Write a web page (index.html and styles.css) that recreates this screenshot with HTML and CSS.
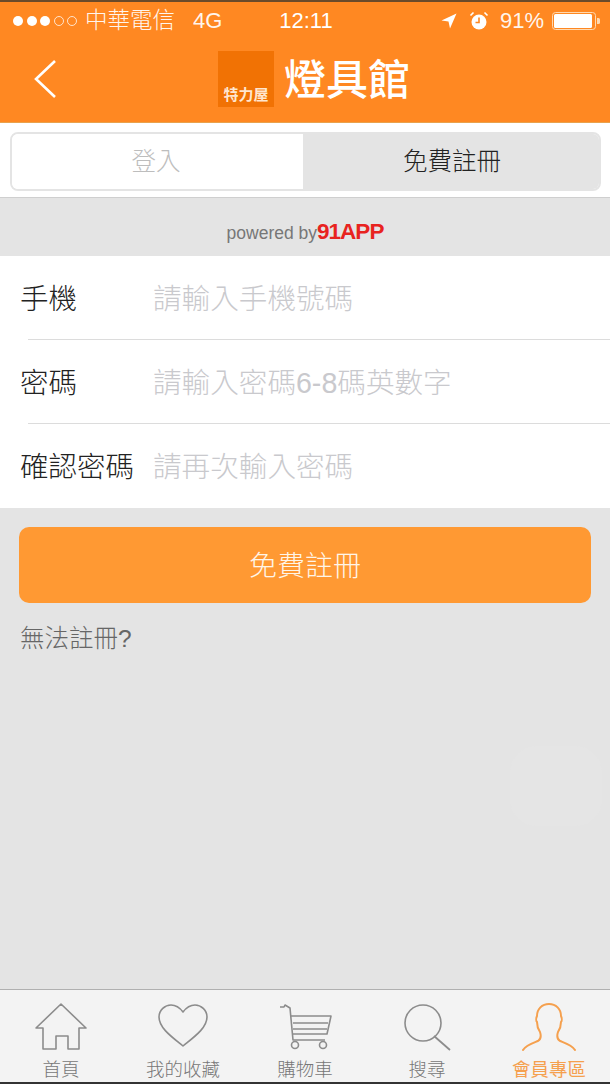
FILE: index.html
```html
<!DOCTYPE html>
<html lang="zh-Hant">
<head>
<meta charset="utf-8">
<title>免費註冊</title>
<link rel="stylesheet" href="styles.css">
</head>
<body>
<div class="page">
  <header class="top">
    <div class="status">
      <div class="status-left">
        <svg class="signal" width="72" height="14" viewBox="0 0 72 14"><circle cx="6" cy="7" r="5" fill="#fff"/><circle cx="20" cy="7" r="5" fill="#fff"/><circle cx="33" cy="7" r="5" fill="#fff"/><circle cx="47" cy="7" r="4.5" fill="none" stroke="#fff" stroke-opacity=".75"/><circle cx="60" cy="7" r="4.5" fill="none" stroke="#fff" stroke-opacity=".75"/></svg>
        <span class="carrier">中華電信</span>
        <span class="net">4G</span>
      </div>
      <div class="clock">12:11</div>
      <div class="status-right">
        <svg width="16" height="16" viewBox="0 0 16 16"><path d="M0.5 7.5 15.5 0.5 9 15.5 7.5 8.5Z" fill="#fff"/></svg>
        <svg class="alarm" width="20" height="20" viewBox="0 0 20 20"><circle cx="10" cy="11" r="7.5" fill="#fff"/><path d="M10 6.5V11.5H6.5" fill="none" stroke="#ff8822" stroke-width="1.6"/><path d="M1.5 4.5 4.5 1.5M18.5 4.5 15.5 1.5" stroke="#fff" stroke-width="1.6"/></svg>
        <span class="pct">91%</span>
        <svg width="48" height="18" viewBox="0 0 48 18"><rect x=".5" y=".5" width="43" height="17" rx="3" fill="none" stroke="#ffd9b0"/><rect x="2" y="2" width="38" height="14" rx="1.5" fill="#fff"/><path d="M45 6h1.500a1.500 1.500 0 0 1 1.500 1.500v3a1.500 1.500 0 0 1-1.500 1.500H45Z" fill="#ffd9b0"/></svg>
      </div>
    </div>
    <div class="nav">
      <svg class="back" width="24" height="40" viewBox="0 0 24 40"><path d="M22 2 3 20 22 38" fill="none" stroke="#fff" stroke-width="2.600"/></svg>
      <div class="logo"><span>特力屋</span></div>
      <div class="title">燈具館</div>
    </div>
  </header>

  <div class="tabs-wrap">
    <div class="tabs">
      <div class="tab tab-off">登入</div>
      <div class="tab tab-on">免費註冊</div>
    </div>
  </div>

  <main class="content">
    <div class="powered"><span class="powered-by">powered by</span><span class="brand">91APP</span></div>
    <div class="form">
      <div class="row"><span class="label">手機</span><span class="hint">請輸入手機號碼</span></div>
      <div class="row"><span class="label">密碼</span><span class="hint">請輸入密碼6-8碼英數字</span></div>
      <div class="row"><span class="label">確認密碼</span><span class="hint">請再次輸入密碼</span></div>
    </div>
    <div class="actions">
      <div class="submit">免費註冊</div>
      <div class="help">無法註冊?</div>
    </div>
    <div class="ghost"></div>
  </main>

  <nav class="tabbar">
    <div class="item">
      <svg width="52" height="48" viewBox="0 0 52 48"><path d="M1 25 26 1 51 25H44V46H33V33H21V46H8V25Z" fill="none" stroke="#8c8c8c" stroke-width="1.600" stroke-linejoin="round"/></svg>
      <span>首頁</span>
    </div>
    <div class="item">
      <svg width="50" height="48" viewBox="0 -1 50 48"><path d="M25 42C14 33 1 24 1 13 1 6 7 1 13 1c5 0 9 3 12 7 3-4 7-7 12-7 6 0 12 5 12 12 0 11-13 20-24 29Z" fill="none" stroke="#8c8c8c" stroke-width="1.600" stroke-linejoin="round"/></svg>
      <span>我的收藏</span>
    </div>
    <div class="item">
      <svg width="54" height="48" viewBox="0 0 54 48"><g fill="none" stroke="#8c8c8c" stroke-width="1.600" stroke-linejoin="round"><path d="M2 4H6L7 2 12 5 15 37H47"/><path d="M13 13H53L49 31H15"/><path d="M15 20H50M15 26H49"/><circle cx="17" cy="42" r="3.500"/><circle cx="45" cy="42" r="3.500"/></g></svg>
      <span>購物車</span>
    </div>
    <div class="item">
      <svg width="48" height="48" viewBox="0 0 48 48"><circle cx="20" cy="20" r="18" fill="none" stroke="#8c8c8c" stroke-width="1.600"/><path d="M31 33 47 47" stroke="#8c8c8c" stroke-width="1.800"/></svg>
      <span>搜尋</span>
    </div>
    <div class="item item-on">
      <svg width="56" height="48" viewBox="0 0 56 48"><path d="M2 47C5 42 12 40 17 38 20 36 20 32 19 29 17 26 16 22 16 19 15 18 15 15 16 13 16 6 21 1 28 1 35 1 40 6 40 13 41 15 41 18 40 19 40 22 39 26 37 29 36 32 36 36 39 38 44 40 51 42 54 47" fill="none" stroke="#f5a04e" stroke-width="2" stroke-linecap="round" stroke-linejoin="round"/></svg>
      <span>會員專區</span>
    </div>
  </nav>
</div>
</body>
</html>
```
FILE: styles.css
```css
* { box-sizing: border-box; }
html, body { margin: 0; padding: 0; }
body { font-family: "Liberation Sans", "Noto Sans CJK TC", sans-serif; background: #e4e4e4; }
.page { width: 610px; height: 1084px; display: flex; flex-direction: column; overflow: hidden; }

.top { height: 123px; background: #ff8822; border-top: 2px solid #6b4a2a; border-bottom: 1px solid #e8a24e; color: #fff; }
.status { height: 38px; display: grid; grid-template-columns: 1fr auto 1fr; align-items: center; padding: 0 10px 0 12px; font-size: 22px; }
.status-left { display: flex; align-items: center; }
.carrier { margin-left: 1px; margin-top: 1px; font-size: 22.500px; font-weight: 300; opacity: .92; line-height: 1; }
.net { margin-left: 18px; opacity: .92; }
.status-right { display: flex; align-items: center; justify-content: flex-end; }
.alarm { margin-left: 12px; }
.pct { margin-left: 11px; margin-right: 8px; opacity: .92; }

.nav { display: flex; align-items: center; height: 82px; padding: 0 0 4px 33px; }
.back { display: block; }
.logo { width: 56px; height: 56px; margin-left: 161px; background: #f17204; display: flex; align-items: flex-end; justify-content: center; padding-bottom: 4px; }
.logo span { font-size: 15px; font-weight: 700; line-height: 1.1; color: #ffe6cf; }
.title { margin-left: 10px; margin-top: 4px; font-size: 42px; font-weight: 500; line-height: 1; }

.tabs-wrap { height: 75px; background: #fff; padding: 9px 9px 0 10px; border-bottom: 1px solid #cfcfcf; }
.tabs { height: 59px; display: flex; border: 2px solid #e4e4e4; border-radius: 8px; overflow: hidden; font-size: 24.500px; font-weight: 300; line-height: 1; }
.tab { display: flex; align-items: center; justify-content: center; padding-top: 1px; }
.tab-off { flex: 0 0 291px; background: #fff; color: #bdbdbd; padding-right: 3px; }
.tab-on { flex: 1; background: #e4e4e4; color: #222; padding-left: 2px; }

.content { flex: 1; position: relative; background: #e4e4e4; }
.powered { height: 58px; display: flex; align-items: center; justify-content: center; padding: 10px 0 0; }
.powered-by { font-size: 17.500px; color: #777; margin-top: 2px; }
.brand { font-size: 22.500px; font-weight: 700; letter-spacing: -1px; color: #e8231f; line-height: 1; }

.form { background: #fff; }
.row { height: 84px; display: flex; align-items: center; position: relative; padding-left: 20px; padding-top: 2px; }
.row + .row::before { content: ""; position: absolute; top: -1px; left: 28px; right: 0; height: 1px; background: #dcdcdc; }
.label { width: 133px; font-size: 28.500px; font-weight: 300; color: #222; line-height: 1; white-space: nowrap; }
.hint { font-size: 28.600px; font-weight: 300; color: #c9c9cd; line-height: 1; white-space: nowrap; }

.actions { padding: 19px 19px 0; }
.submit { height: 76px; border-radius: 10px; background: #ff9933; color: #fff5e8; font-size: 28px; font-weight: 300; display: flex; align-items: center; justify-content: center; line-height: 1; padding-top: 4px; }
.help { margin-top: 18px; font-size: 24.500px; font-weight: 300; line-height: 36px; color: #666; padding-left: 1px; }
.ghost { position: absolute; left: 510px; top: 548px; width: 92px; height: 80px; border-radius: 26px; background: #e5e5e5; }

.tabbar { height: 95px; display: grid; grid-template-columns: 122px 122px 122px 122px 122px; background: #f3f3f3; border-top: 1px solid #b0b0b0; border-bottom: 2px solid #333; }
.item { display: flex; flex-direction: column; align-items: center; justify-content: flex-end; color: #777; font-size: 18.500px; font-weight: 300; line-height: 24px; }
.item svg { display: block; margin-bottom: 7px; }
.item-on { color: #f5a04e; font-weight: 400; }
```
